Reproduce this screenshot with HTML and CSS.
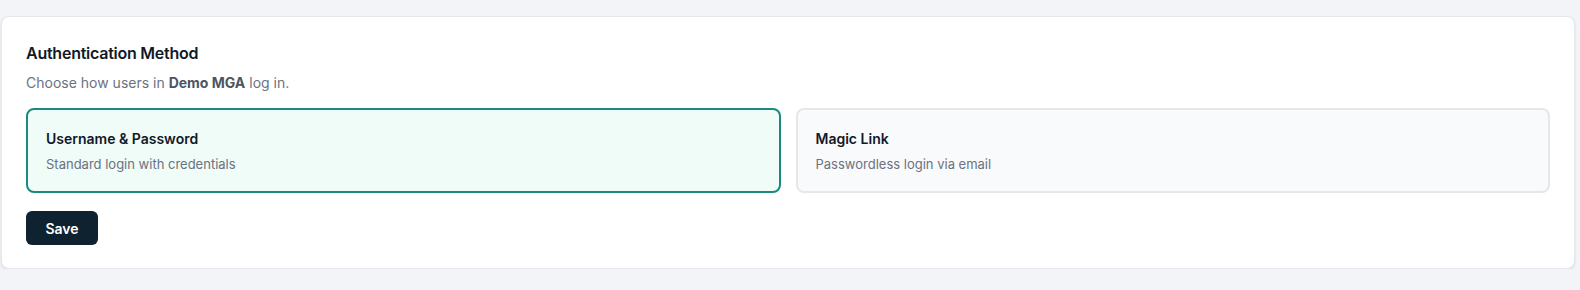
FILE: index.html
```html
<!DOCTYPE html>
<html>
<head>
<meta charset="utf-8">
<link rel="stylesheet" href="styles.css">
</head>
<body>
<div class="page">
  <section class="panel">
    <h2 class="panel-title">Authentication Method</h2>
    <p class="panel-sub">Choose how users in <strong>Demo MGA</strong> log in.</p>
    <div class="options">
      <div class="option selected">
        <div class="option-title">Username &amp; Password</div>
        <div class="option-desc">Standard login with credentials</div>
      </div>
      <div class="option">
        <div class="option-title">Magic Link</div>
        <div class="option-desc">Passwordless login via email</div>
      </div>
    </div>
    <button class="save">Save</button>
  </section>
</div>
</body>
</html>
```
FILE: styles.css
```css
* { box-sizing: border-box; }
html, body { margin: 0; padding: 0; }
body {
  background: #f3f4f7;
  font-family: Inter, "Noto Sans", sans-serif;
  color: #111827;
}
.page {
  padding: 16px 5px 0 1px;
}
.panel {
  background: #ffffff;
  border: 1px solid #e5e7eb;
  border-radius: 8px;
  padding: 24px 24px 23px 24px;
  box-shadow: 0 1px 3px rgba(16, 24, 40, 0.08), 0 1px 2px rgba(16, 24, 40, 0.04);
}
.panel-title {
  margin: 0;
  font-size: 16px;
  line-height: 24px;
  font-weight: 600;
  letter-spacing: -0.25px;
  color: #111827;
}
.panel-sub {
  margin: 8px 0 0 0;
  font-size: 14px;
  line-height: 20px;
  color: #6b7280;
}
.panel-sub strong {
  font-weight: 700;
  color: #4b5563;
}
.options {
  margin-top: 15px;
  display: grid;
  grid-template-columns: 1fr 1fr;
  gap: 15px;
}
.option {
  border: 2px solid #e5e7eb;
  background: #f9fafb;
  border-radius: 8px;
  padding: 19px 18px;
}
.option.selected {
  border-color: #198a7d;
  background: #effcf8;
}
.option-title {
  font-size: 14px;
  line-height: 20px;
  font-weight: 600;
  color: #111827;
}
.option-desc {
  margin-top: 7px;
  font-size: 13px;
  line-height: 16px;
  color: #6b7280;
}
.save {
  margin-top: 18px;
  display: block;
  width: 72px;
  height: 34px;
  border: none;
  border-radius: 6px;
  background: #0f2230;
  color: #ffffff;
  font-family: Inter, "Noto Sans", sans-serif;
  font-size: 14px;
  font-weight: 600;
  padding: 0;
}
```
